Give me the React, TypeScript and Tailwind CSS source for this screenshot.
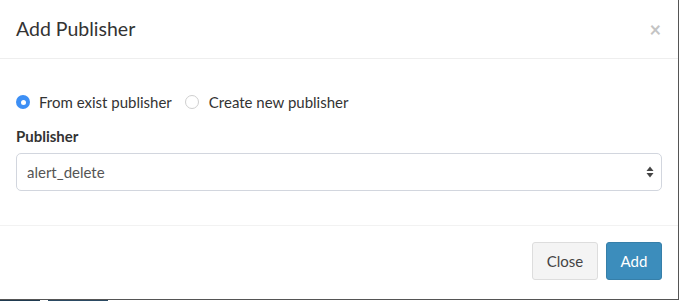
export default function App() {
  return (
    <div className="w-[680px] h-[301px] bg-white overflow-hidden" style={{ fontFamily: "Lato, 'Open Sans', sans-serif" }}>
      <div className="w-[679px] h-[300px] border-r border-b border-[#555] flex flex-col">
        <div className="h-[59px] border-b border-[#eeeeee] pl-4 pr-[17px] flex items-center justify-between">
          <h4 className="text-[19.5px] text-[#333] leading-none">Add Publisher</h4>
          <span className="text-[20px] text-[#c4c4c4] leading-none font-bold">×</span>
        </div>

        <div className="h-[167px] border-b border-[#f2f2f2] px-4 pt-[33px]">
          <div className="flex items-center h-5 text-[15px] text-[#333]">
            <label className="flex items-center">
              <span className="w-[14px] h-[14px] rounded-full bg-[#3d8ff5] flex items-center justify-center">
                <span className="w-[5px] h-[5px] rounded-full bg-white" />
              </span>
              <span className="ml-[9px]">From exist publisher</span>
            </label>
            <label className="flex items-center ml-[13px]">
              <span className="w-[14px] h-[14px] rounded-full border border-[#cfcfcf] bg-white" />
              <span className="ml-[10px]">Create new publisher</span>
            </label>
          </div>
          <div className="mt-[14px] h-5 flex items-center text-[15px] font-bold text-[#333]">Publisher</div>
          <div className="mt-[7px] h-[38px] border border-[#d2d6de] rounded-[5px] flex items-center justify-between pl-[10px] pr-[7px] text-[15px] text-[#555]">
            <span>alert_delete</span>
            <svg width="8" height="12" viewBox="0 0 8 12">
              <path d="M4 0.5 L7.5 5 L0.5 5 Z" fill="#444" />
              <path d="M4 11.5 L7.5 7 L0.5 7 Z" fill="#444" />
            </svg>
          </div>
        </div>

        <div className="flex justify-end gap-2 pr-4 pt-4">
          <button className="w-[66px] h-[38px] rounded-[3px] bg-[#f4f4f4] border border-[#dddddd] text-[15px] text-[#444]">Close</button>
          <button className="w-[56px] h-[38px] rounded-[3px] bg-[#3c8dbc] border border-[#367fa9] text-[15px] text-white">Add</button>
        </div>
      </div>
      <div className="h-px flex">
        <div className="w-[40px] bg-[#1f3a50]" />
        <div className="w-[8px]" />
        <div className="w-[60px] bg-[#2b4a63]" />
      </div>
    </div>
  );
}
